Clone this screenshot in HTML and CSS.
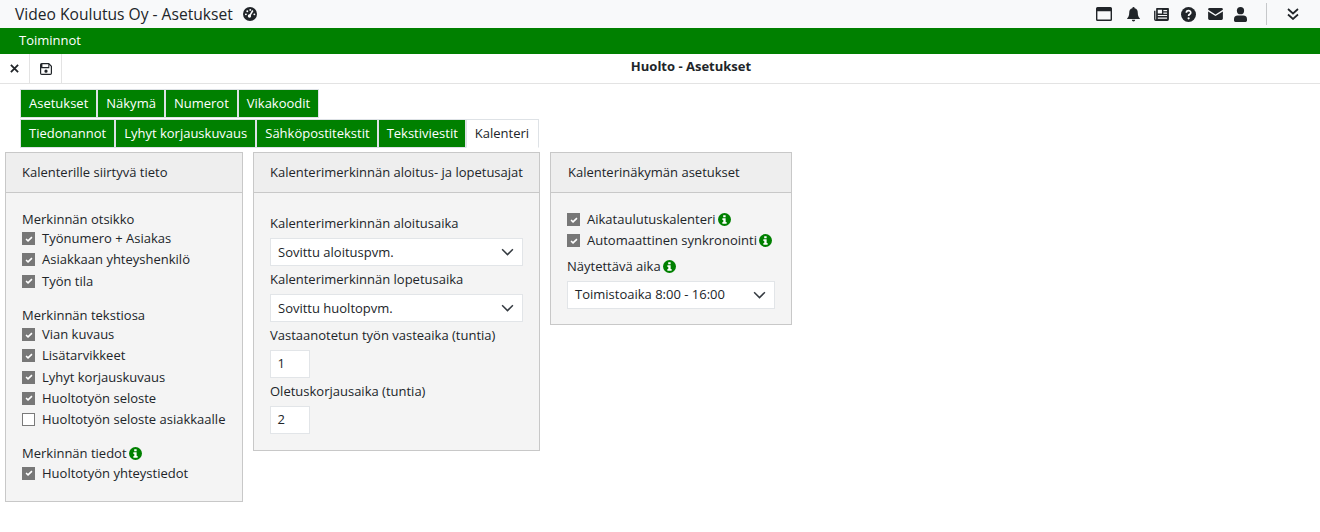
FILE: index.html
```html
<!DOCTYPE html>
<html lang="fi">
<head>
<meta charset="utf-8">
<title>Huolto - Asetukset</title>
<link rel="stylesheet" href="styles.css">
</head>
<body>
<svg class="defs" width="0" height="0" aria-hidden="true">
  <symbol id="info" viewBox="0 0 16 16"><circle cx="8" cy="8" r="8" fill="#008000"/><path fill="#fff" d="M6.400 2.900h3v2.400h-3zM5.400 6.500h4v4.500h1.200v2.100H5.400V11h1.100V8.600H5.400z"/></symbol>
  <symbol id="chev" viewBox="0 0 14 8"><path d="M1.200 1 7 6.800 12.800 1" fill="none" stroke="#343a40" stroke-width="1.600"/></symbol>
  <symbol id="tick" viewBox="0 0 10 8"><path d="M1 4 3.700 6.500 9 1.400" fill="none" stroke="#fff" stroke-width="2.200"/></symbol>
</svg>
<header class="topbar">
  <div class="brand">
    <span class="brand-title">Video Koulutus Oy - Asetukset</span>
    <svg class="gauge" viewBox="0 0 16 16"><circle cx="8" cy="8" r="8" fill="#212529"/><circle cx="7.400" cy="10.300" r="1.900" fill="#fff"/><path d="M7.800 9.800 11.200 4" stroke="#fff" stroke-width="1.700"/><circle cx="3.300" cy="8.400" r="1.100" fill="#fff"/><circle cx="4.900" cy="4.800" r="1.100" fill="#fff"/><circle cx="8.300" cy="3.300" r="1.100" fill="#fff"/><circle cx="13" cy="8.400" r="1.100" fill="#fff"/></svg>
  </div>
  <nav class="top-icons">
    <svg class="ti ti-window" viewBox="0 0 16 14"><path fill="#212529" fill-rule="evenodd" d="M1.500 0h13A1.500 1.500 0 0 1 16 1.500v11a1.500 1.500 0 0 1-1.500 1.500h-13A1.500 1.500 0 0 1 0 12.500v-11A1.500 1.500 0 0 1 1.500 0zM1.400 4.200v8.400h13.200V4.200z"/></svg>
    <svg class="ti ti-bell" viewBox="0 0 14 16"><path fill="#212529" d="M7 0a1.200 1.200 0 0 1 1.200 1.300C10.500 1.900 11.600 3.700 11.600 6c0 3.400 1 4.700 2.200 6v.9H.2V12c1.200-1.300 2.200-2.600 2.200-6 0-2.300 1.100-4.100 3.400-4.700A1.200 1.200 0 0 1 7 0zM5.200 13.700h3.600a1.800 1.800 0 0 1-3.600 0z"/></svg>
    <svg class="ti ti-news" viewBox="0 0 16 14"><path fill="#212529" fill-rule="evenodd" d="M3 0h12.200a.8.800 0 0 1 .8.800v11.400a1.800 1.800 0 0 1-1.800 1.800H1.800A1.800 1.800 0 0 1 0 12.200V3h1.500v9.200a.4.400 0 0 0 .7 0V.8A.8.800 0 0 1 3 0zm1 2v4h4.500V2zm6 .2v1.300h4V2.200zm0 2.600v1.300h4V4.800zM4 7.500v1.200h10V7.500zm0 2.700v1.300h10v-1.300z"/></svg>
    <svg class="ti ti-help" viewBox="0 0 16 16"><circle cx="8" cy="8" r="8" fill="#212529"/><path d="M5.700 6.200c0-3 4.700-3 4.700-.2 0 1.800-2.300 1.700-2.300 3.500" fill="none" stroke="#fff" stroke-width="1.800"/><circle cx="8.100" cy="12" r="1.200" fill="#fff"/></svg>
    <svg class="ti ti-mail" viewBox="0 0 16 13"><path fill="#212529" d="M1.500 0h13A1.500 1.500 0 0 1 16 1.500v.5L8 7 0 2v-.5A1.500 1.500 0 0 1 1.500 0zM0 3.800l8 5 8-5v7.700a1.500 1.500 0 0 1-1.500 1.500h-13A1.500 1.500 0 0 1 0 11.500z"/></svg>
    <svg class="ti ti-user" viewBox="0 0 14 16"><circle cx="7" cy="3.900" r="3.900" fill="#212529"/><path fill="#212529" d="M4 9h6a4 4 0 0 1 4 4v1.500A1.500 1.500 0 0 1 12.500 16h-11A1.500 1.500 0 0 1 0 14.500V13a4 4 0 0 1 4-4z"/></svg>
    <span class="top-sep"></span>
    <svg class="ti ti-dbl" viewBox="0 0 12 12"><path d="M1 1l5 4.500L11 1M1 6.500 6 11l5-4.500" fill="none" stroke="#212529" stroke-width="1.700"/></svg>
  </nav>
</header>
<div class="menubar"><span>Toiminnot</span></div>
<div class="toolbar">
  <button class="tool" type="button"><svg class="tool-x" viewBox="0 0 10 10"><path d="M1 1l8 8M9 1l-8 8" stroke="#212529" stroke-width="2"/></svg></button>
  <button class="tool" type="button"><svg class="tool-save" viewBox="0 0 14 14"><path fill="#212529" fill-rule="evenodd" d="M2 0h8.500L14 3.500V12a2 2 0 0 1-2 2H2a2 2 0 0 1-2-2V2a2 2 0 0 1 2-2zm.8 1.400v3.400h6.900V1.400zM1.400 2v10a.6.600 0 0 0 .6.600h10a.6.600 0 0 0 .6-.6V4.100L10.900 2.400V6H1.400zM7 7.700a1.900 1.900 0 1 1 0 3.800 1.900 1.900 0 0 1 0-3.800z"/></svg></button>
  <div class="toolbar-title">Huolto - Asetukset</div>
</div>
<div class="tabs">
  <div class="tab-row">
    <a class="tab">Asetukset</a><a class="tab">Näkymä</a><a class="tab">Numerot</a><a class="tab">Vikakoodit</a>
  </div>
  <div class="tab-row">
    <a class="tab">Tiedonannot</a><a class="tab">Lyhyt korjauskuvaus</a><a class="tab tab-tight">Sähköpostitekstit</a><a class="tab tab-tight">Tekstiviestit</a><a class="tab tab-active">Kalenteri</a>
  </div>
</div>
<main class="panels">
  <section class="panel panel-a">
    <h2 class="panel-head">Kalenterille siirtyvä tieto</h2>
    <div class="panel-body">
      <div class="group">
        <div class="group-label">Merkinnän otsikko</div>
        <div class="check"><span class="box on"><svg viewBox="0 0 10 8"><use href="#tick"/></svg></span>Työnumero + Asiakas</div>
        <div class="check"><span class="box on"><svg viewBox="0 0 10 8"><use href="#tick"/></svg></span>Asiakkaan yhteyshenkilö</div>
        <div class="check"><span class="box on"><svg viewBox="0 0 10 8"><use href="#tick"/></svg></span>Työn tila</div>
      </div>
      <div class="group">
        <div class="group-label">Merkinnän tekstiosa</div>
        <div class="check"><span class="box on"><svg viewBox="0 0 10 8"><use href="#tick"/></svg></span>Vian kuvaus</div>
        <div class="check"><span class="box on"><svg viewBox="0 0 10 8"><use href="#tick"/></svg></span>Lisätarvikkeet</div>
        <div class="check"><span class="box on"><svg viewBox="0 0 10 8"><use href="#tick"/></svg></span>Lyhyt korjauskuvaus</div>
        <div class="check"><span class="box on"><svg viewBox="0 0 10 8"><use href="#tick"/></svg></span>Huoltotyön seloste</div>
        <div class="check"><span class="box"></span>Huoltotyön seloste asiakkaalle</div>
      </div>
      <div class="group">
        <div class="group-label">Merkinnän tiedot<svg class="info"><use href="#info"/></svg></div>
        <div class="check"><span class="box on"><svg viewBox="0 0 10 8"><use href="#tick"/></svg></span>Huoltotyön yhteystiedot</div>
      </div>
    </div>
  </section>
  <section class="panel panel-b">
    <h2 class="panel-head">Kalenterimerkinnän aloitus- ja lopetusajat</h2>
    <div class="panel-body body-b">
      <label class="field-label">Kalenterimerkinnän aloitusaika</label>
      <div class="select"><span>Sovittu aloituspvm.</span><svg class="chev"><use href="#chev"/></svg></div>
      <label class="field-label">Kalenterimerkinnän lopetusaika</label>
      <div class="select"><span>Sovittu huoltopvm.</span><svg class="chev"><use href="#chev"/></svg></div>
      <label class="field-label">Vastaanotetun työn vasteaika (tuntia)</label>
      <div class="num">1</div>
      <label class="field-label">Oletuskorjausaika (tuntia)</label>
      <div class="num">2</div>
    </div>
  </section>
  <section class="panel panel-c">
    <h2 class="panel-head head-c">Kalenterinäkymän asetukset</h2>
    <div class="panel-body body-c">
      <div class="check"><span class="box on"><svg viewBox="0 0 10 8"><use href="#tick"/></svg></span>Aikataulutuskalenteri<svg class="info"><use href="#info"/></svg></div>
      <div class="check"><span class="box on"><svg viewBox="0 0 10 8"><use href="#tick"/></svg></span>Automaattinen synkronointi<svg class="info"><use href="#info"/></svg></div>
      <div class="field-label label-c">Näytettävä aika<svg class="info"><use href="#info"/></svg></div>
      <div class="select"><span>Toimistoaika 8:00 - 16:00</span><svg class="chev"><use href="#chev"/></svg></div>
    </div>
  </section>
</main>
</body>
</html>
```
FILE: styles.css
```css
* { box-sizing: border-box; }
html, body { margin: 0; padding: 0; }
body { width: 1320px; height: 532px; overflow: hidden; background: #fff; color: #212529; font: 13px/19px "Open Sans", sans-serif; }
.defs { position: absolute; }
.topbar { height: 28px; background: #f8f9fa; display: flex; align-items: center; justify-content: space-between; }
.brand { display: flex; align-items: center; padding-left: 15px; }
.brand-title { font-size: 15.6px; line-height: 28px; }
.gauge { width: 14px; height: 14px; margin-left: 10px; }
.top-icons { display: flex; align-items: center; padding-right: 21px; }
.ti { display: block; flex: none; }
.ti-window { width: 16px; height: 14px; }
.ti-bell { width: 13px; height: 15px; margin-left: 15px; }
.ti-news { width: 15px; height: 13px; margin-left: 14px; }
.ti-help { width: 15px; height: 15px; margin-left: 12px; }
.ti-mail { width: 15px; height: 12px; margin-left: 12px; }
.ti-user { width: 13px; height: 15px; margin-left: 11px; }
.top-sep { width: 1px; height: 22px; background: #c6c8ca; margin: 0 20px 0 19px; }
.ti-dbl { width: 12px; height: 12px; }
.menubar { height: 26px; background: #008000; color: #fff; padding-left: 19px; font-size: 13px; line-height: 24px; font-weight: 500; }
.toolbar { height: 30px; display: flex; border-bottom: 1px solid #e3e3e3; }
.tool { width: 30px; padding: 0; background: #fff; border: 0; border-right: 1px solid #e3e3e3; display: flex; align-items: center; justify-content: center; }
.tool + .tool { width: 32px; }
.tool-x { width: 9px; height: 9px; }
.tool-save { width: 12px; height: 12px; }
.toolbar-title { flex: 1; text-align: center; font-size: 13px; font-weight: 700; line-height: 24px; }
.tabs { padding: 5px 0 0 20px; }
.tab-row { display: flex; height: 30px; }
.tab { display: block; height: 29px; padding: 0 8px; line-height: 27px; color: #fff; background: #008000; border: 1px solid #dee2e6; font-weight: 500; }
.tab-row + .tab-row { height: 29px; }
.tab-tight { padding-right: 7px; }
.tab-active { padding-right: 9px; background: #fff; color: #212529; border-bottom-color: #fff; font-weight: 400; }
.panels { display: flex; align-items: flex-start; padding-left: 5px; gap: 10px; margin-top: 4px; }
.panel { background: #f4f4f4; border: 1px solid #c8c8c8; }
.panel-a { width: 238px; height: 350px; }
.panel-b { width: 287px; height: 299px; }
.panel-c { width: 242px; height: 173px; }
.panel-head { margin: 0; height: 40px; padding: 0 16px; background: #eeeeee; border-bottom: 1px solid #c8c8c8; font-size: 13px; font-weight: 400; line-height: 39px; white-space: nowrap; }
.head-c { padding-left: 17px; }
.panel-body { padding: 17px 16px 0; }
.group { margin-bottom: 14px; }
.group-label { display: flex; align-items: center; height: 18px; line-height: 18px; }
.check { display: flex; align-items: center; height: 21.3px; white-space: nowrap; }
.box { width: 13px; height: 13px; margin-right: 7px; flex: none; border: 1px solid #7a7a7a; background: #fff; display: flex; align-items: center; justify-content: center; }
.box.on { background: #777; border-color: #777; }
.box svg { width: 8px; height: 6px; display: block; }
.info { width: 13px; height: 13px; margin-left: 2.500px; flex: none; }
.body-b { padding-top: 21px; }
.field-label { display: block; height: 19px; line-height: 19px; }
.select { height: 28px; background: #fff; border: 1px solid #e2e5e8; display: flex; align-items: center; justify-content: space-between; padding: 0 8px 0 7px; margin: 5px 0 4px; }
.chev { width: 13px; height: 8px; }
.num { width: 40px; height: 28px; background: #fff; border: 1px solid #e2e5e8; line-height: 25px; padding-left: 6.500px; margin: 5px 0 4px; }
.body-c { padding-top: 16px; }
.label-c { display: flex; align-items: center; margin-top: 5px; }
```
